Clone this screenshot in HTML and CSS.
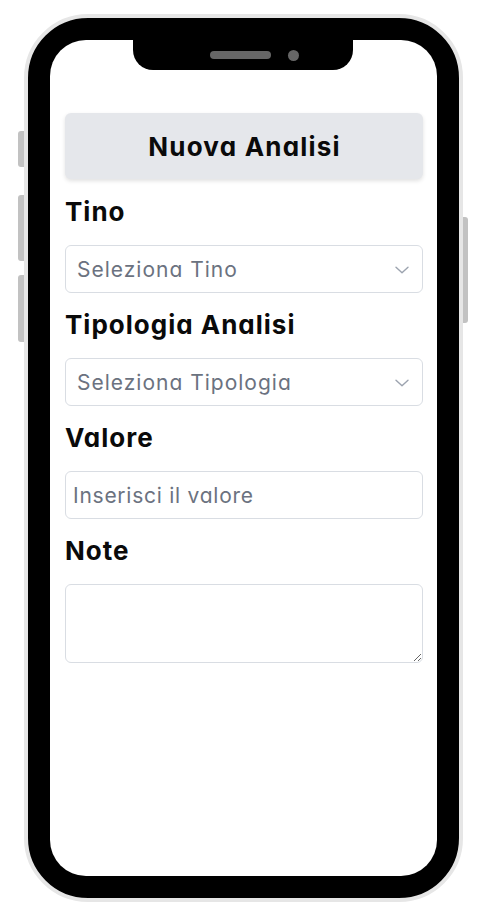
FILE: index.html
```html
<!DOCTYPE html>
<html lang="it">
<head>
<meta charset="utf-8">
<title>Nuova Analisi</title>
<link rel="stylesheet" href="styles.css">
</head>
<body>
<div class="phone">
  <span class="btn btn-l1"></span>
  <span class="btn btn-l2"></span>
  <span class="btn btn-l3"></span>
  <span class="btn btn-r1"></span>
  <div class="screen">
    <div class="notch">
      <span class="speaker"></span>
      <span class="camera"></span>
    </div>
    <main class="content">
      <div class="header"><h1 class="title">Nuova Analisi</h1></div>
      <div class="field">
        <label class="label">Tino</label>
        <div class="select">
          <span class="placeholder">Seleziona Tino</span>
          <svg class="chev" width="14" height="8" viewBox="0 0 14 8"><path d="M1 1.2 L7 6.8 L13 1.2" fill="none" stroke="#9ca3af" stroke-width="1.4" stroke-linecap="round" stroke-linejoin="round"/></svg>
        </div>
      </div>
      <div class="field">
        <label class="label">Tipologia Analisi</label>
        <div class="select">
          <span class="placeholder">Seleziona Tipologia</span>
          <svg class="chev" width="14" height="8" viewBox="0 0 14 8"><path d="M1 1.2 L7 6.8 L13 1.2" fill="none" stroke="#9ca3af" stroke-width="1.4" stroke-linecap="round" stroke-linejoin="round"/></svg>
        </div>
      </div>
      <div class="field">
        <label class="label">Valore</label>
        <input class="input" type="text" placeholder="Inserisci il valore">
      </div>
      <div class="field">
        <label class="label">Note</label>
        <textarea class="textarea"></textarea>
      </div>
    </main>
  </div>
</div>
</body>
</html>
```
FILE: styles.css
```css
* { box-sizing: border-box; }
html, body { margin: 0; padding: 0; background: #ffffff; }
body {
  width: 487px;
  height: 918px;
  overflow: hidden;
  font-family: "Inter", "Liberation Sans", sans-serif;
  font-feature-settings: "cv11" 1;
}
.phone {
  position: relative;
  margin: 14px 0 0 24px;
  width: 439px;
  height: 888px;
  border: 4px solid #e6e6e6;
  border-radius: 64px;
  background: #000;
  padding: 22px;
}
.btn {
  position: absolute;
  background: #c2c2c2;
  width: 6px;
}
.btn-l1 { left: -10px; top: 113px; height: 36px; border-radius: 3px 0 0 3px; }
.btn-l2 { left: -10px; top: 177px; height: 66px; border-radius: 3px 0 0 3px; }
.btn-l3 { left: -10px; top: 257px; height: 67px; border-radius: 3px 0 0 3px; }
.btn-r1 { right: -9px; top: 199px; height: 106px; width: 5px; border-radius: 0 3px 3px 0; }
.screen {
  position: relative;
  width: 387px;
  height: 836px;
  background: #fff;
  border-radius: 36px;
  overflow: hidden;
}
.notch {
  position: absolute;
  top: 0;
  left: 83px;
  width: 220px;
  height: 30px;
  background: #000;
  border-radius: 0 0 20px 20px;
  display: flex;
  align-items: center;
  padding: 0 0 0 77px;
}
.speaker {
  width: 61px;
  height: 8px;
  border-radius: 4px;
  background: #666;
}
.camera {
  width: 11px;
  height: 11px;
  border-radius: 50%;
  background: #666;
  margin-left: 17px;
}
.content {
  padding: 73px 14px 0 15px;
}
.header {
  height: 66px;
  background: #e5e7eb;
  border-radius: 6px;
  box-shadow: 0 2px 4px rgba(0, 0, 0, 0.12);
  display: flex;
  align-items: center;
  justify-content: center;
  margin-bottom: 17px;
}
.title {
  margin: 0;
  font-size: 26px;
  font-weight: 700;
  color: #0a0a0a;
  letter-spacing: 1.2px;
  padding-left: 1px;
}
.field {
  display: flex;
  flex-direction: column;
  margin-bottom: 16px;
}
.label {
  font-size: 26px;
  line-height: 32px;
  font-weight: 700;
  color: #0a0a0a;
  letter-spacing: 1px;
  margin-bottom: 17px;
}
.select {
  height: 48px;
  border: 1px solid #d9dde3;
  border-radius: 6px;
  display: flex;
  align-items: center;
  justify-content: space-between;
  padding: 0 13px 0 11px;
}
.placeholder {
  font-size: 21px;
  letter-spacing: 1px;
  color: #6b7280;
}
.chev { display: block; margin-top: 1px; }
.input {
  height: 48px;
  border: 1px solid #d9dde3;
  border-radius: 6px;
  padding: 0 7px;
  font-family: inherit;
  font-feature-settings: "cv11" 1;
  font-size: 21px;
  letter-spacing: 0.75px;
  color: #111;
  outline: none;
  width: 100%;
}
.input::placeholder { color: #6b7280; }
.textarea {
  height: 79px;
  border: 1px solid #d9dde3;
  border-radius: 6px;
  font-family: inherit;
  width: 100%;
  outline: none;
  padding: 8px;
  display: block;
}
```
